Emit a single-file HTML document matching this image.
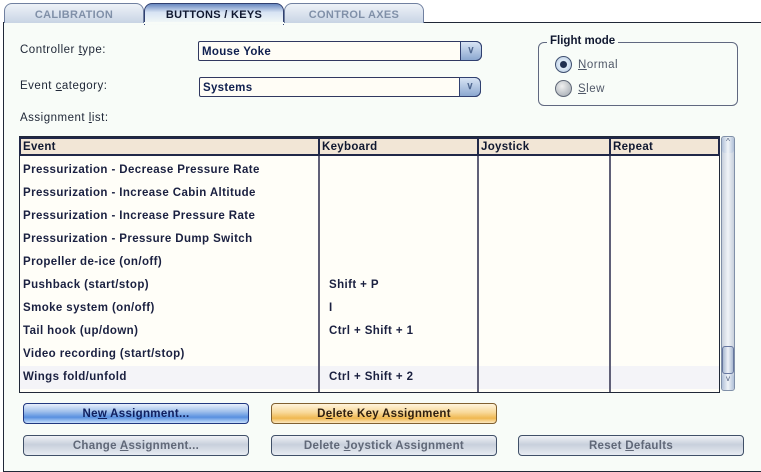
<!DOCTYPE html>
<html><head><style>
*{box-sizing:border-box;margin:0;padding:0}
body{width:761px;height:468px;background:#fff;position:relative;overflow:hidden;font-family:"Liberation Sans",sans-serif;font-size:11px;color:#1a2040}
.abs{position:absolute}
.tab{position:absolute;top:3px;height:20px;border:1px solid #7080a0;border-bottom:none;border-radius:8px 8px 0 0;background:linear-gradient(#eef2f8,#c8d4e4);color:#8090a8;font-weight:bold;font-size:11px;text-align:center;line-height:22px;letter-spacing:0.3px}
.panel{position:absolute;left:3px;top:22px;width:760px;height:450px;border:1px solid #202838;background:#f8fcf8}
.lbl{position:absolute;font-size:11.5px;color:#202838;letter-spacing:0.5px}
.combo{position:absolute;height:20px;border:1px solid #303860;background:#fffdf6;font-weight:bold;font-size:11.5px;padding-left:3px;line-height:20px;color:#102050;border-radius:2px 6px 6px 2px;letter-spacing:0.3px}
.combo .btn{position:absolute;right:-1px;top:-1px;width:22px;height:20px;background:linear-gradient(#d8e4f4,#8ca8d0);border:1px solid #304070;border-radius:0 6px 6px 0;color:#506890;text-align:center;font-size:10px;line-height:18px}
.th{position:absolute;top:137px;height:19px;background:#f2e6d6;border:2px solid #202848;font-weight:bold;font-size:11.5px;padding-left:2px;line-height:17px;color:#101830;letter-spacing:0.3px}
.row{position:absolute;left:23px;font-weight:bold;font-size:11.5px;color:#1a2040;letter-spacing:0.4px}
.k{position:absolute;left:329px;font-weight:bold;font-size:11.5px;color:#1a2040;letter-spacing:0.4px}
.vl{position:absolute;top:156px;width:2px;height:236px;background:#606078}
.b{position:absolute;height:21px;border:1px solid #405068;border-radius:4px;text-align:center;line-height:20px;font-size:11.5px;font-weight:bold;letter-spacing:0.3px}
.g{background:linear-gradient(#f0f2f6 0%,#c8d0dc 45%,#e8ecf2 100%);color:#606878}
</style></head><body>
<div class="panel"></div>
<div class="tab" style="left:4px;width:140px">CALIBRATION</div>
<div class="tab" style="left:144px;width:140px;height:22px;color:#101830;background:linear-gradient(#6888c0,#d8e4f4 40%,#f8fcf8);border-color:#304070;z-index:2">BUTTONS / KEYS</div>
<div class="tab" style="left:284px;width:140px">CONTROL AXES</div>
<div class="abs" style="left:144px;top:22px;width:140px;height:2px;background:#f8fcf8;z-index:3"></div>

<div class="lbl" style="left:20px;top:44px">Controller <u>t</u>ype:</div>
<div class="lbl" style="left:20px;top:80px">Event <u>c</u>ategory:</div>
<div class="lbl" style="left:20px;top:112px">Assignment <u>l</u>ist:</div>
<div class="combo" style="left:198px;top:41px;width:284px">Mouse Yoke<div class="btn">∨</div></div>
<div class="combo" style="left:199px;top:77px;width:282px">Systems<div class="btn">∨</div></div>

<div class="abs" style="left:538px;top:42px;width:200px;height:64px;border:1px solid #606880;border-radius:6px"></div>
<div class="abs" style="left:547px;top:35px;background:#f8fcf8;padding:0 3px;font-weight:bold;font-size:11.5px;color:#101830">Flight mode</div>
<div class="abs" style="left:555px;top:56px;width:17px;height:17px;border-radius:50%;border:1px solid #405070;background:radial-gradient(#203050 30%,#e0ecf8 36%,#b0c4dc)"></div>
<div class="abs" style="left:555px;top:80px;width:17px;height:17px;border-radius:50%;border:1px solid #606878;background:radial-gradient(circle at 40% 35%,#f0f0f0,#9ca4ac)"></div>
<div class="lbl" style="left:578px;top:59px;color:#505868"><u>N</u>ormal</div>
<div class="lbl" style="left:578px;top:83px;color:#505868"><u>S</u>lew</div>

<div class="abs" style="left:19px;top:136px;width:701px;height:257px;border:1px solid #202838;background:#fffef8"></div>
<div class="abs" style="left:20px;top:366px;width:699px;height:23px;background:#f4f4f8"></div>
<div class="th" style="left:19px;width:301px">Event</div>
<div class="th" style="left:318px;width:161px">Keyboard</div>
<div class="th" style="left:477px;width:134px">Joystick</div>
<div class="th" style="left:609px;width:111px">Repeat</div>
<div class="vl" style="left:318px"></div><div class="vl" style="left:477px"></div><div class="vl" style="left:609px"></div>

<div class="abs" style="left:721px;top:136px;width:14px;height:255px;border:1px solid #8090a8;background:linear-gradient(90deg,#c8d0dc,#f0f4f8,#c8d0dc);border-radius:3px"></div>
<div class="abs" style="left:722px;top:137px;width:12px;height:16px;background:linear-gradient(90deg,#b0c0d8,#f0f4f8,#b0c0d8);border-radius:3px;font-size:8px;text-align:center;color:#506080">^</div>
<div class="abs" style="left:722px;top:346px;width:12px;height:28px;background:linear-gradient(90deg,#a8b8d0,#eef2f8,#a8b8d0);border:1px solid #6878a0;border-radius:3px"></div>
<div class="abs" style="left:722px;top:374px;width:12px;height:16px;background:linear-gradient(90deg,#b0c0d8,#f0f4f8,#b0c0d8);border-radius:3px;font-size:8px;text-align:center;color:#506080">v</div>

<div class="row" style="top:164px">Pressurization - Decrease Pressure Rate</div>
<div class="row" style="top:187px">Pressurization - Increase Cabin Altitude</div>
<div class="row" style="top:210px">Pressurization - Increase Pressure Rate</div>
<div class="row" style="top:233px">Pressurization - Pressure Dump Switch</div>
<div class="row" style="top:256px">Propeller de-ice (on/off)</div>
<div class="row" style="top:279px">Pushback (start/stop)</div><div class="k" style="top:279px">Shift + P</div>
<div class="row" style="top:302px">Smoke system (on/off)</div><div class="k" style="top:302px">I</div>
<div class="row" style="top:325px">Tail hook (up/down)</div><div class="k" style="top:325px">Ctrl + Shift + 1</div>
<div class="row" style="top:348px">Video recording (start/stop)</div>
<div class="row" style="top:371px">Wings fold/unfold</div><div class="k" style="top:371px">Ctrl + Shift + 2</div>

<div class="b" style="left:23px;top:403px;width:226px;background:linear-gradient(#e8f0fc 0%,#a0c0ec 40%,#5890e0 70%,#c8e0fc 100%);border-color:#203880;color:#102060">Ne<u>w</u> Assignment...</div>
<div class="b" style="left:271px;top:403px;width:226px;background:linear-gradient(#fff4dc 0%,#f8d898 45%,#f0b850 75%,#fce8c0 100%);border-color:#806030;color:#302010">D<u>e</u>lete Key Assignment</div>
<div class="b g" style="left:23px;top:435px;width:226px">Change <u>A</u>ssignment...</div>
<div class="b g" style="left:271px;top:435px;width:226px">Delete <u>J</u>oystick Assignment</div>
<div class="b g" style="left:518px;top:435px;width:226px">Reset <u>D</u>efaults</div>
</body></html>
